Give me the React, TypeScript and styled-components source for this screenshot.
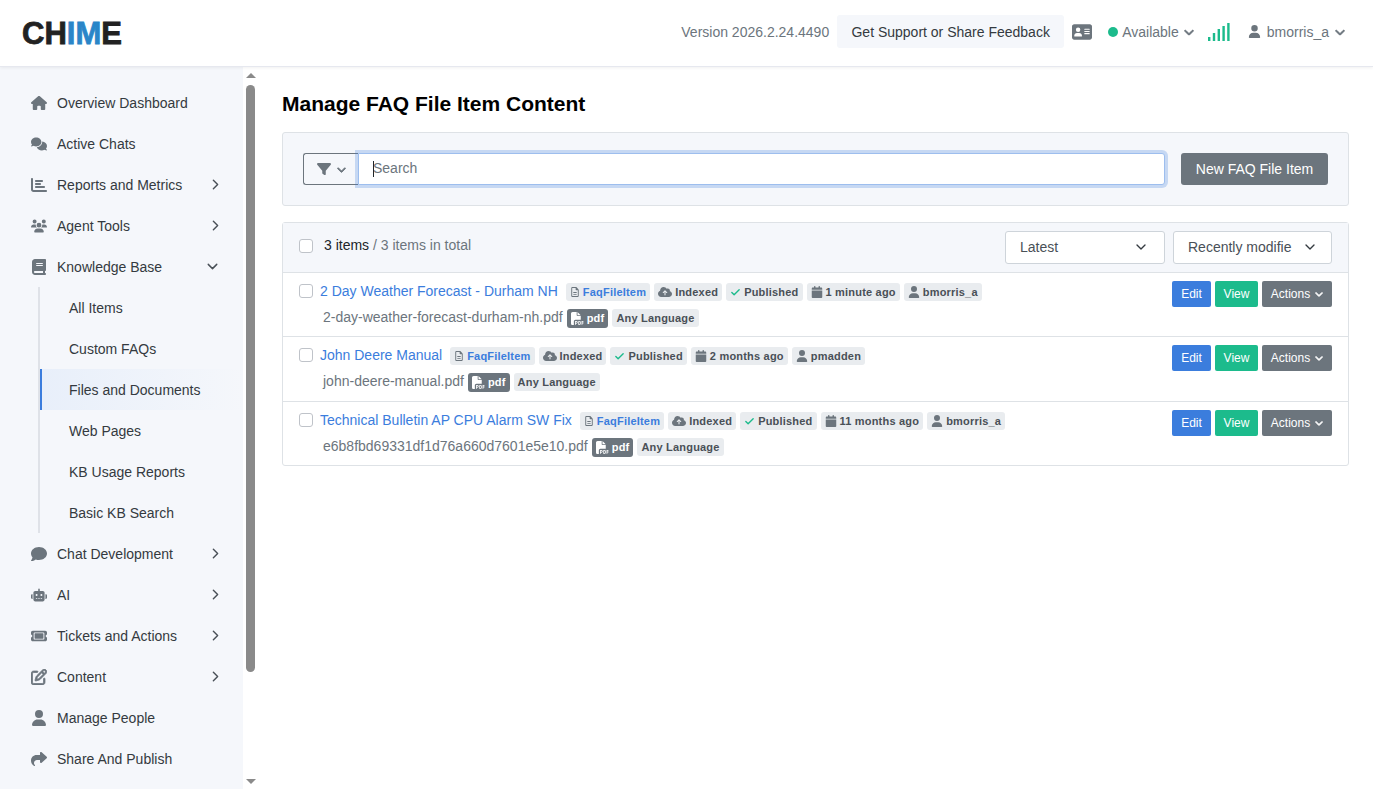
import React from 'react';
import styled, { createGlobalStyle } from 'styled-components';
import {
  FaAddressCard,
  FaBook,
  FaCalendar,
  FaChartBar,
  FaChevronDown,
  FaCloudArrowUp,
  FaComment,
  FaComments,
  FaFilePdf,
  FaFilter,
  FaHouse,
  FaRegFileLines,
  FaRegPenToSquare,
  FaRobot,
  FaShare,
  FaTicket,
  FaUser,
  FaUsers,
} from 'react-icons/fa6';
import { Check as CheckIcon, ChevronDown, ChevronRight } from 'lucide-react';

const GlobalStyle = createGlobalStyle`
  html, body {
    margin: 0;
    height: 100%;
    overflow: hidden;
    background: #fff;
    font-family: "Liberation Sans", Arial, sans-serif;
    font-size: 14px;
    color: #212529;
  }
  * { box-sizing: border-box; }
`;

const Page = styled.div`
  display: flex;
  flex-direction: column;
  height: 789px;
`;

const Header = styled.header`
  flex: 0 0 67px;
  display: flex;
  align-items: center;
  justify-content: space-between;
  padding: 0 28px 3px 22px;
  border-bottom: 1px solid #e6e8ef;
  box-shadow: 0 1px 3px rgba(0, 0, 0, 0.06);
  position: relative;
  z-index: 2;
`;

const Logo = styled.div`
  font-size: 31px;
  font-weight: 700;
  letter-spacing: 0;
  line-height: 1;
  color: #222;
  margin-top: 3px;
  -webkit-text-stroke: 0.8px currentColor;

  span {
    color: #2a86c8;
  }
`;

const HeaderRight = styled.div`
  display: flex;
  align-items: center;
  color: #6c757d;
`;

const SupportButton = styled.div`
  height: 33px;
  width: 227px;
  margin: 0 8px;
  display: flex;
  align-items: center;
  justify-content: center;
  background: #f5f7fb;
  border-radius: 3px;
  color: #343a40;
`;

const Status = styled.div`
  display: flex;
  align-items: center;
  margin-left: 16px;
  gap: 4px;
`;

const Dot = styled.span`
  width: 10px;
  height: 10px;
  border-radius: 50%;
  background: #1cbb8c;
`;

const UserMenu = styled.div`
  display: flex;
  align-items: center;
  margin-left: 18px;
  gap: 6px;
`;

// the small dropdown carets are heavier than the stock glyph
const Caretdown = styled(FaChevronDown)`
  stroke: currentColor;
  stroke-width: 50px;
`;

const Body = styled.div`
  flex: 1;
  display: flex;
  min-height: 0;
`;

const Sidebar = styled.nav`
  flex: 0 0 243px;
  background: #f5f7fb;
  padding-top: 15px;
`;

const NavRow = styled.div`
  height: 41px;
  display: flex;
  align-items: center;
  padding-left: 29px;
  color: #343a40;
`;

const NavIcon = styled.span`
  width: 20px;
  margin-right: 8px;
  display: flex;
  align-items: center;
  justify-content: center;
  color: #6c757d;
  font-size: 16px;
`;

const EditIcon = styled(FaRegPenToSquare)`
  stroke: currentColor;
  stroke-width: 24px;
`;

const NavLabel = styled.span`
  flex: 1;
`;

const NavChevron = styled.span<{ $open?: boolean }>`
  width: ${(p) => (p.$open ? '39px' : '36px')};
  display: flex;
  color: #495057;
`;

const SubNav = styled.div`
  margin-left: 38px;
  border-left: 2px solid #dfe2e8;
`;

const SubRow = styled.div<{ $active?: boolean }>`
  height: 41px;
  display: flex;
  align-items: center;
  padding-left: ${(p) => (p.$active ? '27px' : '29px')};
  color: #343a40;
  ${(p) =>
    p.$active &&
    `
    border-left: 2px solid #3b7ddd;
    background: linear-gradient(90deg, #e8effa 0%, #f5f7fb 100%);
  `}
`;

const Scrollbar = styled.div`
  flex: 0 0 15px;
  display: flex;
  flex-direction: column;
  align-items: center;
  background: #fff;
  padding-top: 6px;
`;

const ArrowUp = styled.span`
  width: 0;
  height: 0;
  border-left: 5px solid transparent;
  border-right: 5px solid transparent;
  border-bottom: 5px solid #8a8a8a;
`;

const ArrowDown = styled.span`
  width: 0;
  height: 0;
  border-left: 5px solid transparent;
  border-right: 5px solid transparent;
  border-top: 5px solid #8a8a8a;
  margin-top: 107px;
`;

const Thumb = styled.div`
  width: 9px;
  height: 587px;
  margin-top: 7px;
  background: #8a8a8a;
  border-radius: 5px;
`;

const Main = styled.main`
  flex: 1;
  padding: 24px 24px 0;
  min-width: 0;
`;

const Title = styled.h1`
  margin: 0 0 15px;
  font-size: 21px;
  line-height: 26px;
  font-weight: 700;
  color: #000;
`;

const SearchPanel = styled.section`
  height: 74px;
  display: flex;
  align-items: center;
  padding: 0 20px;
  background: #f5f7fb;
  border: 1px solid #dee2e6;
  border-radius: 3px;
  margin-bottom: 16px;
`;

const FilterButton = styled.div`
  flex: 0 0 55px;
  height: 32px;
  display: flex;
  align-items: center;
  justify-content: center;
  gap: 6px;
  border: 1px solid #6c757d;
  border-right: none;
  border-radius: 3px 0 0 3px;
  color: #6c757d;
  font-size: 14px;
`;

const SearchWrap = styled.div`
  flex: 1;
  position: relative;
  display: flex;
`;

const SearchInput = styled.input`
  width: 100%;
  height: 32px;
  padding: 0 14px 2px;
  font: inherit;
  border: 1px solid #9dbeee;
  border-radius: 0 3px 3px 0;
  box-shadow: 0 0 0 3px rgba(59, 125, 221, 0.25);
  outline: none;

  &::placeholder {
    color: #6c757d;
    opacity: 1;
  }
`;

const Caret = styled.span`
  position: absolute;
  left: 15px;
  top: 8px;
  width: 1px;
  height: 16px;
  background: #212529;
`;

const NewButton = styled.div`
  flex: 0 0 147px;
  height: 32px;
  margin-left: 16px;
  display: flex;
  align-items: center;
  justify-content: center;
  background: #6c757d;
  color: #fff;
  border-radius: 3px;
`;

const ListPanel = styled.section`
  border: 1px solid #dee2e6;
  border-radius: 3px;
`;

const ListHeader = styled.div`
  height: 50px;
  display: flex;
  align-items: center;
  padding: 0 16px;
  background: #f5f7fb;
  border-bottom: 1px solid #dee2e6;
`;

const Check = styled.span`
  flex: 0 0 14px;
  width: 14px;
  height: 14px;
  border: 1px solid #bfc3c9;
  border-radius: 3px;
  background: #fff;
`;

const HeaderCheck = styled(Check)`
  margin-top: -3px;
`;

const Count = styled.div`
  flex: 1;
  margin-left: 11px;
  margin-top: -5px;
  color: #6c757d;

  b {
    font-weight: 400;
    color: #212529;
  }
`;

const SortSelect = styled.div<{ $width: number }>`
  width: ${(p) => p.$width}px;
  height: 33px;
  margin-left: 8px;
  margin-top: -1px;
  display: flex;
  align-items: center;
  padding: 0 15px 0 14px;
  background: #fff;
  border: 1px solid #ced4da;
  border-radius: 3px;
  color: #495057;
`;

const SortText = styled.span`
  flex: 1;
  white-space: nowrap;
`;

const SortIcon = styled.span`
  flex: 0 0 16px;
  margin-left: 10px;
  display: flex;
  color: #343a40;
`;

const Row = styled.div`
  height: 64px;
  display: flex;
  padding: 8px 16px 0;
  border-bottom: 1px solid #dee2e6;

  &:nth-child(3) {
    height: 65px;
  }

  &:last-child {
    height: 63px;
    border-bottom: none;
  }
`;

const RowCheck = styled(Check)`
  margin-top: 3px;
`;

const RowBody = styled.div`
  flex: 1;
  margin-left: 7px;
`;

const RowLine = styled.div`
  height: 20px;
  display: flex;
  align-items: center;
  gap: 4px;

  > :not(:first-child) {
    margin-top: 2px;
  }
`;

const FileLine = styled(RowLine)`
  margin-top: 6px;
  margin-left: 3px;
  color: #6c757d;
`;

const ItemTitle = styled.a`
  color: #3b7ddd;
  margin-right: 4px;
  margin-top: -1px;
`;

const Badge = styled.span<{ $tone?: 'blue' | 'dark' }>`
  height: ${(p) => (p.$tone === 'dark' ? '19px' : '18px')};
  display: inline-flex;
  align-items: center;
  gap: 3px;
  padding: 0 4px;
  border-radius: 3px;
  font-size: 11px;
  font-weight: 700;
  letter-spacing: 0.2px;
  background: ${(p) => (p.$tone === 'dark' ? '#6c757d' : '#e9ecef')};
  color: ${(p) => (p.$tone === 'blue' ? '#3b7ddd' : p.$tone === 'dark' ? '#fff' : '#495057')};

  svg {
    color: ${(p) => (p.$tone === 'dark' ? '#fff' : '#6c757d')};
  }
`;

const CheckMark = styled(CheckIcon)`
  && {
    color: #1cbb8c;
  }
`;

const RowActions = styled.div`
  display: flex;
  gap: 4px;
`;

const ActionButton = styled.div<{ $color: string; $width: number }>`
  width: ${(p) => p.$width}px;
  height: 26px;
  display: flex;
  align-items: center;
  justify-content: center;
  gap: 5px;
  border-radius: 2px;
  font-size: 12px;
  color: #fff;
  background: ${(p) => p.$color};
`;

// five rising bars next to the status menu
function SignalIcon() {
  return (
    <svg width="22" height="18" viewBox="0 0 22 18" fill="#1cbb8c" style={{ marginLeft: 14 }}>
      <rect x="0" y="14" width="2.4" height="4" />
      <rect x="4.8" y="10" width="2.4" height="8" />
      <rect x="9.6" y="6" width="2.4" height="12" />
      <rect x="14.4" y="3" width="2.4" height="15" />
      <rect x="19.2" y="0" width="2.4" height="18" />
    </svg>
  );
}

interface NavEntry {
  label: string;
  icon: React.ReactNode;
  chevron?: 'right' | 'down';
}

const navTop: NavEntry[] = [
  { label: 'Overview Dashboard', icon: <FaHouse /> },
  { label: 'Active Chats', icon: <FaComments /> },
  { label: 'Reports and Metrics', icon: <FaChartBar />, chevron: 'right' },
  { label: 'Agent Tools', icon: <FaUsers />, chevron: 'right' },
  { label: 'Knowledge Base', icon: <FaBook />, chevron: 'down' },
];

const subItems = ['All Items', 'Custom FAQs', 'Files and Documents', 'Web Pages', 'KB Usage Reports', 'Basic KB Search'];

const navBottom: NavEntry[] = [
  { label: 'Chat Development', icon: <FaComment />, chevron: 'right' },
  { label: 'AI', icon: <FaRobot />, chevron: 'right' },
  { label: 'Tickets and Actions', icon: <FaTicket />, chevron: 'right' },
  { label: 'Content', icon: <EditIcon />, chevron: 'right' },
  { label: 'Manage People', icon: <FaUser /> },
  { label: 'Share And Publish', icon: <FaShare /> },
];

const items = [
  {
    title: '2 Day Weather Forecast - Durham NH',
    file: '2-day-weather-forecast-durham-nh.pdf',
    age: '1 minute ago',
    owner: 'bmorris_a',
  },
  {
    title: 'John Deere Manual',
    file: 'john-deere-manual.pdf',
    age: '2 months ago',
    owner: 'pmadden',
  },
  {
    title: 'Technical Bulletin AP CPU Alarm SW Fix',
    file: 'e6b8fbd69331df1d76a660d7601e5e10.pdf',
    age: '11 months ago',
    owner: 'bmorris_a',
  },
];

function NavItem({ entry }: { entry: NavEntry }) {
  return (
    <NavRow>
      <NavIcon>{entry.icon}</NavIcon>
      <NavLabel>{entry.label}</NavLabel>
      {entry.chevron && (
        <NavChevron $open={entry.chevron === 'down'}>
          {entry.chevron === 'right' ? <ChevronRight size={17} /> : <ChevronDown size={17} />}
        </NavChevron>
      )}
    </NavRow>
  );
}

export default function App() {
  return (
    <Page>
      <GlobalStyle />
      <Header>
        <Logo>
          CH<span>IM</span>E
        </Logo>
        <HeaderRight>
          <span>Version 2026.2.24.4490</span>
          <SupportButton>Get Support or Share Feedback</SupportButton>
          <FaAddressCard size={20} />
          <Status>
            <Dot />
            <span>Available</span>
            <Caretdown size={10} style={{ marginLeft: 1 }} />
          </Status>
          <SignalIcon />
          <UserMenu>
            <FaUser size={13} />
            <span>bmorris_a</span>
            <Caretdown size={10} />
          </UserMenu>
        </HeaderRight>
      </Header>
      <Body>
        <Sidebar>
          {navTop.map((entry) => (
            <NavItem key={entry.label} entry={entry} />
          ))}
          <SubNav>
            {subItems.map((label) => (
              <SubRow key={label} $active={label === 'Files and Documents'}>
                {label}
              </SubRow>
            ))}
          </SubNav>
          {navBottom.map((entry) => (
            <NavItem key={entry.label} entry={entry} />
          ))}
        </Sidebar>
        <Scrollbar>
          <ArrowUp />
          <Thumb />
          <ArrowDown />
        </Scrollbar>
        <Main>
          <Title>Manage FAQ File Item Content</Title>
          <SearchPanel>
            <FilterButton>
              <FaFilter />
              <Caretdown size={9} />
            </FilterButton>
            <SearchWrap>
              <SearchInput placeholder="Search" />
              <Caret />
            </SearchWrap>
            <NewButton>New FAQ File Item</NewButton>
          </SearchPanel>
          <ListPanel>
            <ListHeader>
              <HeaderCheck />
              <Count>
                <b>3 items</b> / 3 items in total
              </Count>
              <SortSelect $width={160}>
                <SortText>Latest</SortText>
                <SortIcon>
                  <ChevronDown size={16} />
                </SortIcon>
              </SortSelect>
              <SortSelect $width={159}>
                <SortText>Recently modifie</SortText>
                <SortIcon>
                  <ChevronDown size={16} />
                </SortIcon>
              </SortSelect>
            </ListHeader>
            {items.map((item) => (
              <Row key={item.file}>
                <RowCheck />
                <RowBody>
                  <RowLine>
                    <ItemTitle>{item.title}</ItemTitle>
                    <Badge $tone="blue">
                      <FaRegFileLines size={10} />
                      FaqFileItem
                    </Badge>
                    <Badge>
                      <FaCloudArrowUp size={14} />
                      Indexed
                    </Badge>
                    <Badge>
                      <CheckMark size={11} strokeWidth={3} />
                      Published
                    </Badge>
                    <Badge>
                      <FaCalendar size={12} />
                      {item.age}
                    </Badge>
                    <Badge>
                      <FaUser size={12} />
                      {item.owner}
                    </Badge>
                  </RowLine>
                  <FileLine>
                    <span>{item.file}</span>
                    <Badge $tone="dark">
                      <FaFilePdf size={13} />
                      pdf
                    </Badge>
                    <Badge>Any Language</Badge>
                  </FileLine>
                </RowBody>
                <RowActions>
                  <ActionButton $color="#3b7ddd" $width={39}>
                    Edit
                  </ActionButton>
                  <ActionButton $color="#1cbb8c" $width={43}>
                    View
                  </ActionButton>
                  <ActionButton $color="#6c757d" $width={70}>
                    Actions
                    <Caretdown size={8} />
                  </ActionButton>
                </RowActions>
              </Row>
            ))}
          </ListPanel>
        </Main>
      </Body>
    </Page>
  );
}
